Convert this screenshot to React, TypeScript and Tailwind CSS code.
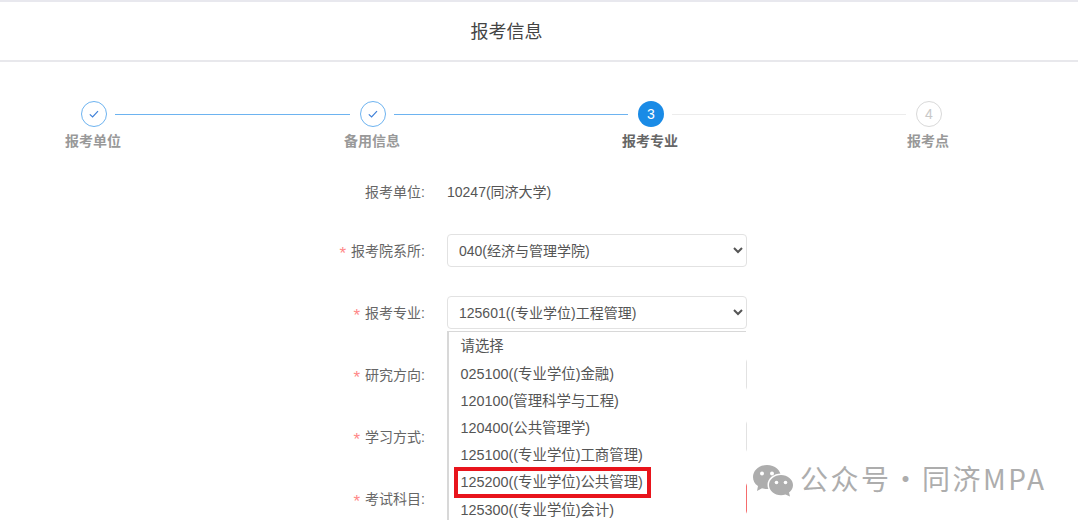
const FONT = "font-['Liberation_Sans','Noto_Sans_CJK_SC',sans-serif]";

const steps = [
    { label: "报考单位", state: "done", width: "w-[279px]" },
    { label: "备用信息", state: "done", width: "w-[278px]" },
    { label: "报考专业", state: "active", width: "w-[278px]" },
    { label: "报考点", state: "todo", width: "w-[26px]" },
];

const options = [
    "请选择",
    "025100((专业学位)金融)",
    "120100(管理科学与工程)",
    "120400(公共管理学)",
    "125100((专业学位)工商管理)",
    "125200((专业学位)公共管理)",
    "125300((专业学位)会计)",
];

const Circle: React.FC<{ state: string, index: number }> = ({ state, index }) => {
    if (state === "done") {
        return (
            <div className="w-[26px] h-[26px] shrink-0 rounded-full border border-[#6db3f0] flex items-center justify-center">
                <svg width="12" height="12" viewBox="0 0 12 12" fill="none">
                    <path d="M1.8 6.4 L4.6 9 L10 3.2" stroke="#3f80d8" strokeWidth="1.2" />
                </svg>
            </div>
        );
    }
    if (state === "active") {
        return (
            <div className="w-[26px] h-[26px] shrink-0 rounded-full bg-[#1a8be6] text-white text-[14px] flex items-center justify-center">
                {index + 1}
            </div>
        );
    }
    return (
        <div className="w-[26px] h-[26px] shrink-0 rounded-full border border-[#d9d9d9] text-[#c8c8c8] text-[14px] flex items-center justify-center">
            {index + 1}
        </div>
    );
};

const Label: React.FC<{ text: string, required?: boolean }> = ({ text, required }) => (
    <label className={`w-[425px] text-right text-[14px] text-[#666] shrink-0 ${required ? "pt-px" : ""}`}>
        {required ? <span className="text-[#f88] text-[17px] leading-[14px] mr-[5px] align-[-3px]">*</span> : null}
        {text}:
    </label>
);

const Select: React.FC<{ value: string, error?: boolean }> = ({ value, error }) => (
    <select
        defaultValue={value}
        className={`block w-[300px] h-[33px] rounded-[4px] border px-[7px] text-[14px] text-[#555] bg-white ${error ? "border-[#f56c6c]" : "border-[#e2e2e2]"}`}
    >
        <option>{value}</option>
    </select>
);

const WechatIcon = () => (
    <svg width="42" height="34" viewBox="0 0 42 34">
        <path d="M15 1 C23 1 29 6.500 29 13 C29 19.500 23 25 15 25 C13 25 11.500 24.800 10 24.300 L5 27 L6 22 C2.500 19.800 1 16.500 1 13 C1 6.500 7 1 15 1 Z" fill="#adadad" />
        <circle cx="10" cy="9.500" r="2" fill="#fff" />
        <circle cx="20" cy="9.500" r="2" fill="#fff" />
        <ellipse cx="29" cy="21" rx="13.500" ry="11.500" fill="#fff" />
        <path d="M29 11 C35.500 11 41 15.500 41 21 C41 24 39.500 26.500 37 28.500 L38 32.500 L33.500 30.500 C32 31 30.500 31.200 29 31.200 C22.500 31.200 17 26.500 17 21 C17 15.500 22.500 11 29 11 Z" fill="#adadad" />
        <circle cx="24.500" cy="18.500" r="1.800" fill="#fff" />
        <circle cx="33.500" cy="18.500" r="1.800" fill="#fff" />
    </svg>
);

export default function App() {
    return (
        <div className={`relative w-[1078px] h-[520px] overflow-hidden bg-white ${FONT}`}>
            <div className="h-[2px] bg-[#e8e8ee]" />
            <div className="h-[60px] border-b-2 border-[#e8e8ec] flex items-center justify-center pr-[65px] pt-[2px] text-[18px] text-[#444]">
                报考信息
            </div>

            <div className="flex mt-[39px] ml-[81px]">
                {steps.map((s, i) => (
                    <div key={s.label} className={s.width}>
                        <div className="flex items-center">
                            <Circle state={s.state} index={i} />
                            {i < 3 ? (
                                <div className={`flex-1 h-px ml-[8px] mr-[10px] ${s.state === "done" ? "bg-[#6db3f0]" : "bg-[#ececec]"}`} />
                            ) : null}
                        </div>
                        <div className={`-ml-[21px] w-[66px] mt-[4px] text-center text-[14px] font-bold whitespace-nowrap ${s.state === "active" ? "text-[#666]" : "text-[#999]"}`}>
                            {s.label}
                        </div>
                    </div>
                ))}
            </div>

            <div className="flex flex-col mt-[24px]">
                <div className="flex items-center h-[33px] mb-[25px]">
                    <Label text="报考单位" />
                    <span className="ml-[22px] text-[14px] text-[#555]">10247(同济大学)</span>
                </div>
                <div className="flex flex-col gap-[29px]">
                    <div className="flex items-center">
                        <Label text="报考院系所" required />
                        <div className="ml-[22px]"><Select value="040(经济与管理学院)" /></div>
                    </div>
                    <div className="flex items-center">
                        <Label text="报考专业" required />
                        <div className="ml-[22px] relative">
                            <Select value="125601((专业学位)工程管理)" />
                            <ul className="absolute z-10 left-0 top-[35px] w-[299px] h-[200px] bg-white border-t border-l-2 border-[#d8d8d8] pl-[11.500px] pt-[1.400px] text-[14.400px] text-[#555]">
                                {options.map(o => (
                                    <li key={o} className="h-[27.200px] leading-[27px] whitespace-nowrap">{o}</li>
                                ))}
                            </ul>
                        </div>
                    </div>
                    <div className="flex items-center">
                        <Label text="研究方向" required />
                        <div className="ml-[22px]"><Select value="请选择" /></div>
                    </div>
                    <div className="flex items-center">
                        <Label text="学习方式" required />
                        <div className="ml-[22px]"><Select value="请选择" /></div>
                    </div>
                    <div className="flex items-center">
                        <Label text="考试科目" required />
                        <div className="ml-[22px]"><Select value="请选择" error /></div>
                    </div>
                </div>
            </div>

            <div className="absolute z-20 left-[454px] top-[467px] w-[197px] h-[31px] border-4 border-[#e8141c]" />

            <div className="absolute z-20 left-[752px] top-[457px] flex items-center">
                <div className="mt-[6px]"><WechatIcon /></div>
                <span className="ml-[6px] text-[28px] tracking-[2.500px] text-[#adadad] font-['Noto_Sans_CJK_SC',sans-serif] whitespace-nowrap">公众号·同济MPA</span>
            </div>
        </div>
    );
}
